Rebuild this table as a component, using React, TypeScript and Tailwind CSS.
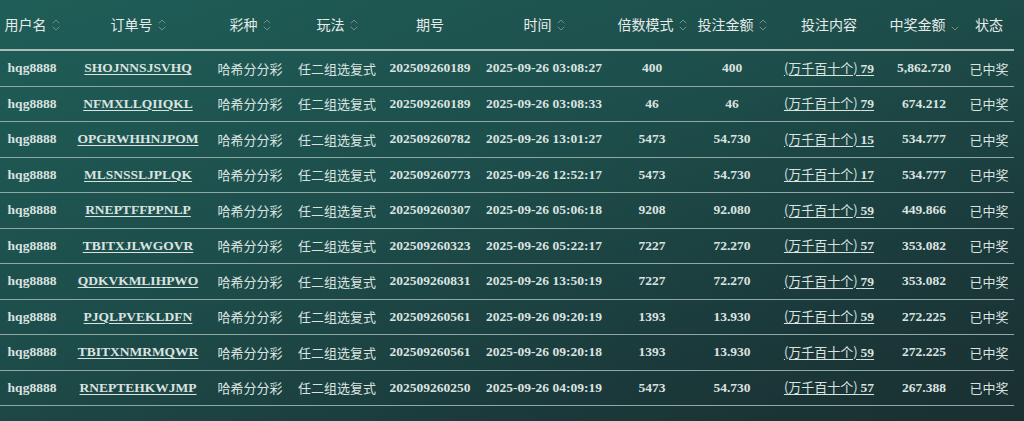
import React from "react";

const rows = [
  ["SHOJNNSJSVHQ", "202509260189", "2025-09-26 03:08:27", "400", "400", "79", "5,862.720"],
  ["NFMXLLQIIQKL", "202509260189", "2025-09-26 03:08:33", "46", "46", "79", "674.212"],
  ["OPGRWHHNJPOM", "202509260782", "2025-09-26 13:01:27", "5473", "54.730", "15", "534.777"],
  ["MLSNSSLJPLQK", "202509260773", "2025-09-26 12:52:17", "5473", "54.730", "17", "534.777"],
  ["RNEPTFFPPNLP", "202509260307", "2025-09-26 05:06:18", "9208", "92.080", "59", "449.866"],
  ["TBITXJLWGOVR", "202509260323", "2025-09-26 05:22:17", "7227", "72.270", "57", "353.082"],
  ["QDKVKMLIHPWO", "202509260831", "2025-09-26 13:50:19", "7227", "72.270", "79", "353.082"],
  ["PJQLPVEKLDFN", "202509260561", "2025-09-26 09:20:19", "1393", "13.930", "59", "272.225"],
  ["TBITXNMRMQWR", "202509260561", "2025-09-26 09:20:18", "1393", "13.930", "59", "272.225"],
  ["RNEPTEHKWJMP", "202509260250", "2025-09-26 04:09:19", "5473", "54.730", "57", "267.388"],
];

const cols = "grid grid-cols-[64px_148px_76px_98px_88px_140px_76px_84px_110px_80px_50px]";
const serif = "font-bold font-['Liberation_Serif','Noto_Sans_CJK_SC',serif] text-[13.5px]";

function Sort({ only }: { only?: "down" }) {
  return (
    <svg width="8" height="14" viewBox="0 0 8 14" className="ml-[5px] shrink-0" fill="none" stroke="#6f8f8a" strokeWidth="1" strokeLinecap="round" strokeLinejoin="round">
      {only !== "down" && <path d="M1 5 L4 2 L7 5" />}
      <path d="M1 9 L4 12 L7 9" />
    </svg>
  );
}

function H({ t, s, only }: { t: string; s?: boolean; only?: "down" }) {
  return (
    <div className="flex items-center justify-center">
      <span>{t}</span>
      {s && <Sort only={only} />}
    </div>
  );
}

export default function App() {
  return (
    <div className="w-[1024px] h-[421px] overflow-hidden font-['Noto_Sans_CJK_SC','Noto_Sans',sans-serif] bg-[linear-gradient(160deg,#1f5e58_0%,#1d4d4a_45%,#1b3a3b_75%,#1a2f31_100%)]">
      <div className="w-[1014px]">
        <div className={`${cols} h-[51px] items-center text-[14px] text-[#e6ecea] border-b-2 border-[#a9bdb9]`}>
          <H t="用户名" s />
          <H t="订单号" s />
          <H t="彩种" s />
          <H t="玩法" s />
          <H t="期号" />
          <H t="时间" s />
          <H t="倍数模式" s />
          <H t="投注金额" s />
          <H t="投注内容" />
          <H t="中奖金额" s only="down" />
          <H t="状态" />
        </div>
        {rows.map((r, i) => (
          <div key={i} className={`${cols} h-[35.5px] items-center text-[13px] text-[#dbe3e0] border-b border-[#8fa8a4] text-center`}>
            <div className={serif}>hqg8888</div>
            <div className={`${serif} underline underline-offset-2`}>{r[0]}</div>
            <div>哈希分分彩</div>
            <div>任二组选复式</div>
            <div className={serif}>{r[1]}</div>
            <div className={serif}>{r[2]}</div>
            <div className={serif}>{r[3]}</div>
            <div className={serif}>{r[4]}</div>
            <div className="underline underline-offset-2">
              <span>(万千百十个) </span>
              <span className={serif}>{r[5]}</span>
            </div>
            <div className={serif}>{r[6]}</div>
            <div>已中奖</div>
          </div>
        ))}
      </div>
    </div>
  );
}
